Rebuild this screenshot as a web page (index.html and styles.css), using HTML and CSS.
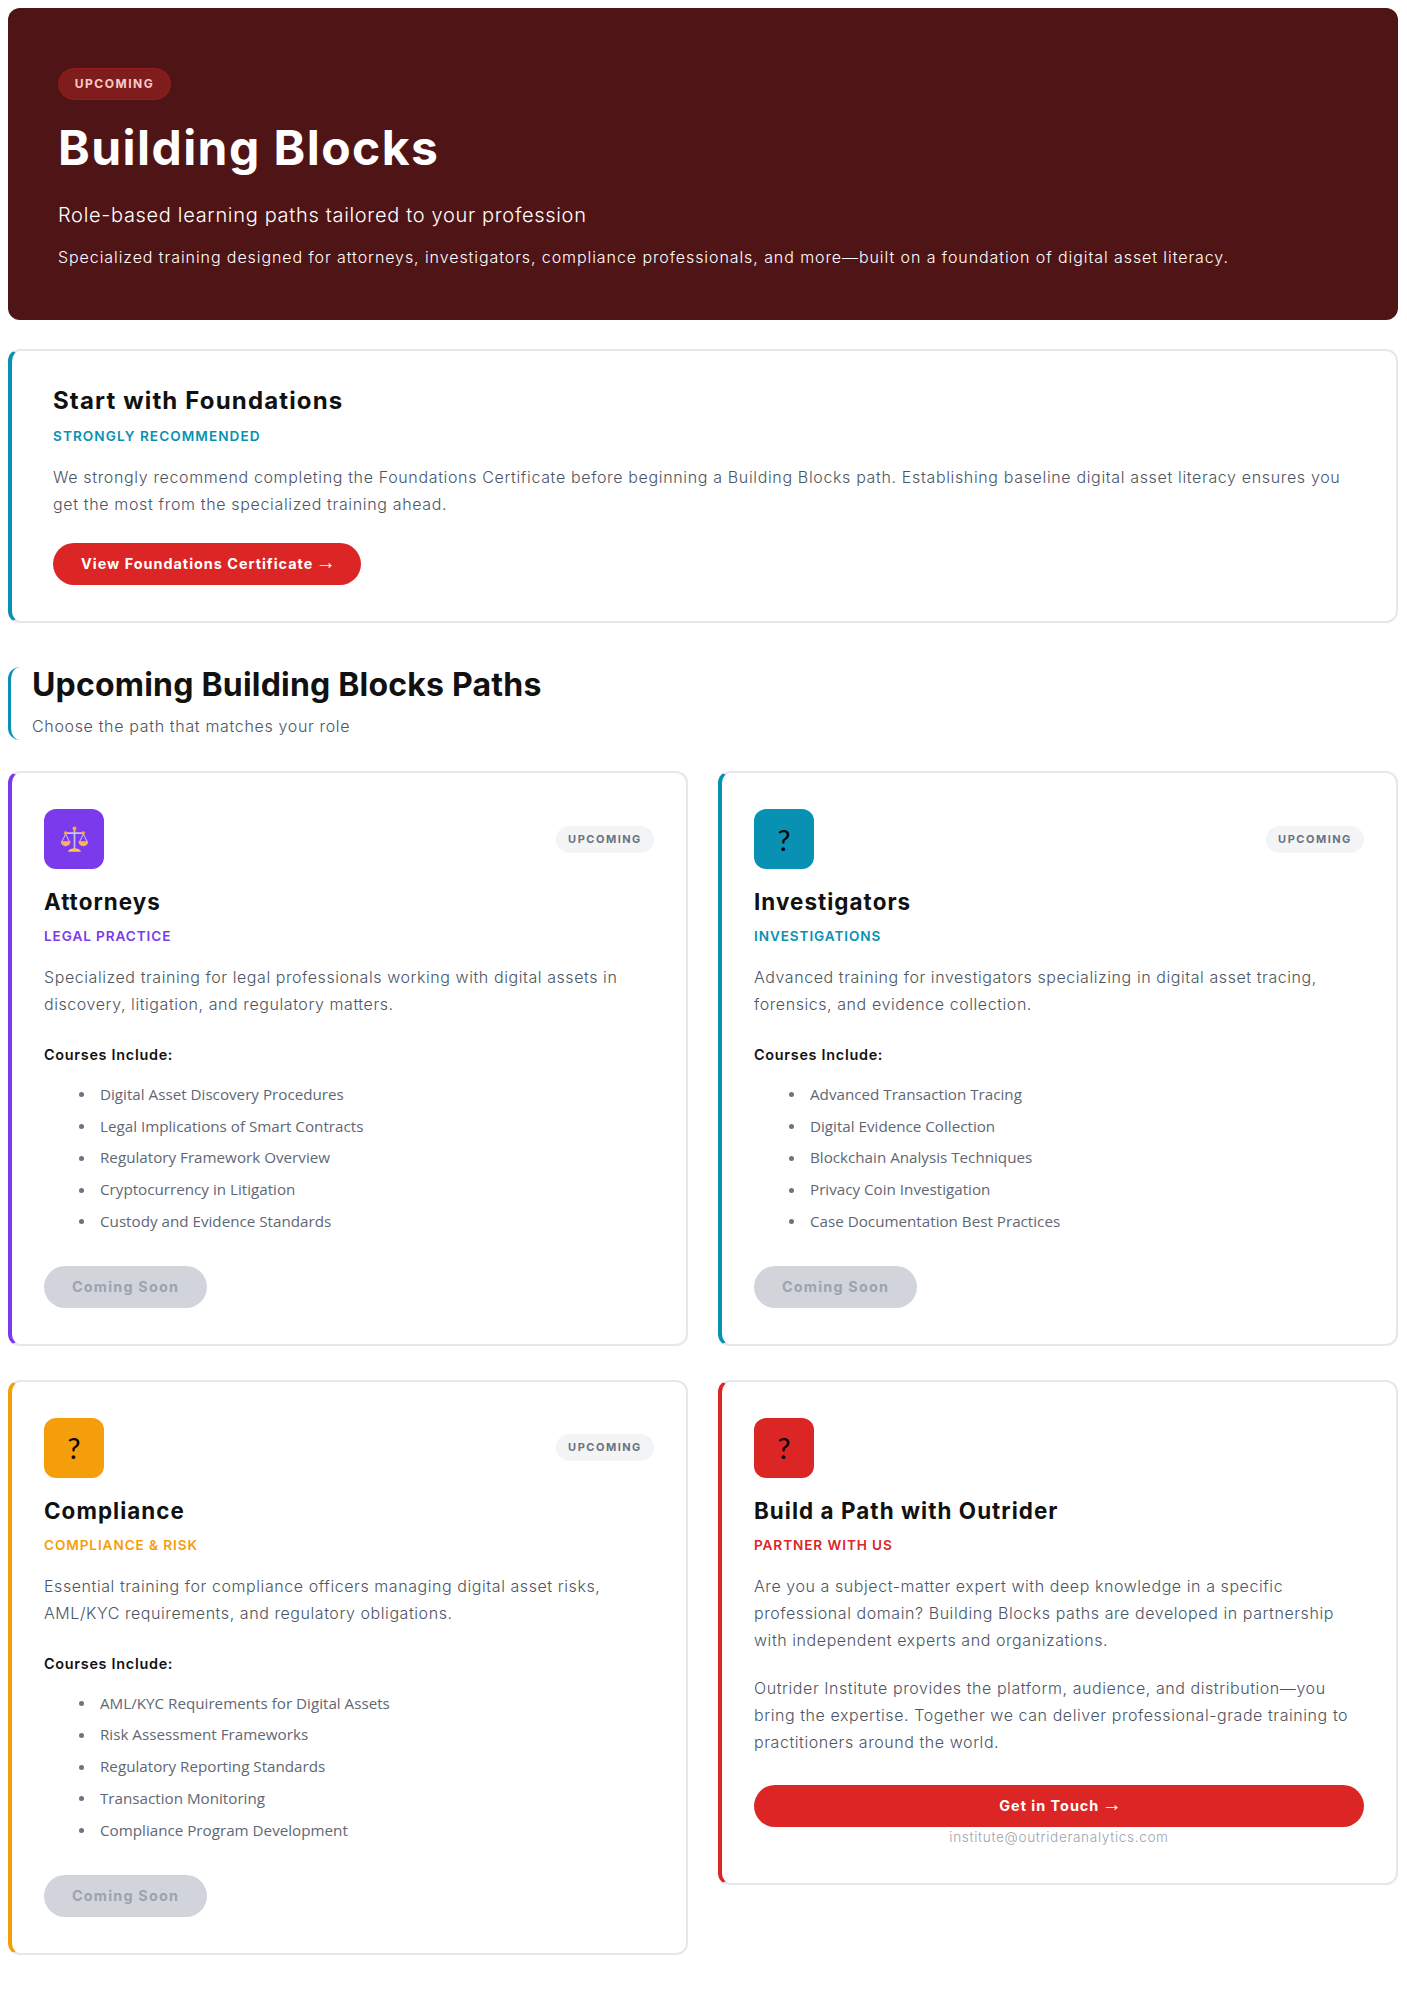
FILE: index.html
```html
<!DOCTYPE html>
<html lang="en">
<head>
    <meta charset="UTF-8">
    <meta name="viewport" content="width=device-width, initial-scale=1.0">
    <title>Building Blocks</title>
    <link rel="stylesheet" href="styles.css">
</head>
<body>
    <header class="hero">
        <span class="hero-badge">UPCOMING</span>
        <h1>Building Blocks</h1>
        <p class="hero-sub">Role-based learning paths tailored to your profession</p>
        <p class="hero-desc">Specialized training designed for attorneys, investigators, compliance professionals, and more—built on a foundation of digital asset literacy.</p>
    </header>

    <section class="foundations">
        <h2>Start with Foundations</h2>
        <div class="kicker kicker-teal">STRONGLY RECOMMENDED</div>
        <p class="text">We strongly recommend completing the Foundations Certificate before beginning a Building Blocks path. Establishing baseline digital asset literacy ensures you get the most from the specialized training ahead.</p>
        <a class="btn" href="#">View Foundations Certificate <span class="arrow">→</span></a>
    </section>

    <div class="section-head">
        <h2>Upcoming Building Blocks Paths</h2>
        <p>Choose the path that matches your role</p>
    </div>

    <div class="paths">
        <article class="path path-purple">
            <div class="path-top">
                <div class="path-icon icon-purple">
                    <svg width="31" height="31" viewBox="0 0 28 28">
                        <rect x="13.2" y="4" width="1.6" height="19" fill="#c4bee0"/>
                        <rect x="6" y="7.5" width="16" height="1.5" fill="#cfcae6"/>
                        <path d="M6 9 L2.6 16 M6 9 L9.4 16 M22 9 L18.6 16 M22 9 L25.4 16" stroke="#dcd8ef" stroke-width=".8" fill="none"/>
                        <path d="M1.6 15.6 H10.4 C10.2 18.6 8.4 20 6 20 C3.6 20 1.8 18.6 1.6 15.6 Z" fill="#fcb45c"/>
                        <path d="M17.6 15.6 H26.4 C26.2 18.6 24.4 20 22 20 C19.6 20 17.8 18.6 17.6 15.6 Z" fill="#fcb45c"/>
                        <path d="M8 25 C9 22.6 11.5 22 14 22 C16.5 22 19 22.6 20 25 Z" fill="#fdc44f"/>
                        <circle cx="14" cy="4" r="1.8" fill="#f9a63a"/>
                        <circle cx="6" cy="8.2" r="1.6" fill="#f9a63a"/>
                        <circle cx="22" cy="8.2" r="1.6" fill="#f9a63a"/>
                    </svg>
                </div>
                <span class="status">UPCOMING</span>
            </div>
            <h3>Attorneys</h3>
            <div class="kicker kicker-purple">LEGAL PRACTICE</div>
            <p class="text">Specialized training for legal professionals working with digital assets in discovery, litigation, and regulatory matters.</p>
            <div class="courses-title">Courses Include:</div>
            <ul class="courses">
                <li>Digital Asset Discovery Procedures</li>
                <li>Legal Implications of Smart Contracts</li>
                <li>Regulatory Framework Overview</li>
                <li>Cryptocurrency in Litigation</li>
                <li>Custody and Evidence Standards</li>
            </ul>
            <span class="btn btn-off">Coming Soon</span>
        </article>

        <article class="path path-teal">
            <div class="path-top">
                <div class="path-icon icon-teal">?</div>
                <span class="status">UPCOMING</span>
            </div>
            <h3>Investigators</h3>
            <div class="kicker kicker-teal">INVESTIGATIONS</div>
            <p class="text">Advanced training for investigators specializing in digital asset tracing, forensics, and evidence collection.</p>
            <div class="courses-title">Courses Include:</div>
            <ul class="courses">
                <li>Advanced Transaction Tracing</li>
                <li>Digital Evidence Collection</li>
                <li>Blockchain Analysis Techniques</li>
                <li>Privacy Coin Investigation</li>
                <li>Case Documentation Best Practices</li>
            </ul>
            <span class="btn btn-off">Coming Soon</span>
        </article>

        <article class="path path-amber">
            <div class="path-top">
                <div class="path-icon icon-amber">?</div>
                <span class="status">UPCOMING</span>
            </div>
            <h3>Compliance</h3>
            <div class="kicker kicker-amber">COMPLIANCE &amp; RISK</div>
            <p class="text">Essential training for compliance officers managing digital asset risks, AML/KYC requirements, and regulatory obligations.</p>
            <div class="courses-title">Courses Include:</div>
            <ul class="courses">
                <li>AML/KYC Requirements for Digital Assets</li>
                <li>Risk Assessment Frameworks</li>
                <li>Regulatory Reporting Standards</li>
                <li>Transaction Monitoring</li>
                <li>Compliance Program Development</li>
            </ul>
            <span class="btn btn-off">Coming Soon</span>
        </article>

        <article class="path path-red">
            <div class="path-top">
                <div class="path-icon icon-red">?</div>
            </div>
            <h3>Build a Path with Outrider</h3>
            <div class="kicker kicker-red">PARTNER WITH US</div>
            <p class="text">Are you a subject-matter expert with deep knowledge in a specific professional domain? Building Blocks paths are developed in partnership with independent experts and organizations.</p>
            <p class="text text-next">Outrider Institute provides the platform, audience, and distribution—you bring the expertise. Together we can deliver professional-grade training to practitioners around the world.</p>
            <a class="btn btn-wide" href="#">Get in Touch <span class="arrow">→</span></a>
            <div class="email">institute@outrideranalytics.com</div>
        </article>
    </div>
</body>
</html>
```

FILE: styles.css
```css
body {
    font-family: Inter, "Noto Sans", sans-serif;
    margin: 0;
    padding: 8px 9px 56px 8px;
    background-color: #fff;
    color: #111;
}
.hero {
    background: #4f1415;
    border-radius: 12px;
    padding: 60px 50px 50px;
    height: 312px;
    box-sizing: border-box;
    color: #fff;
}
.hero-badge {
    display: block;
    width: 113px;
    height: 32px;
    box-sizing: border-box;
    background: #7f1d1d;
    border: 1px solid #991b1b;
    border-radius: 16px;
    color: #fecaca;
    font-size: 12px;
    font-weight: 700;
    letter-spacing: 1.5px;
    line-height: 30px;
    text-align: center;
}
.hero h1 {
    font-size: 48px;
    font-weight: 700;
    line-height: 58px;
    margin: 19px 0 0;
    letter-spacing: 1.45px;
}
.hero-sub {
    font-size: 20px;
    font-weight: 300;
    line-height: 28px;
    letter-spacing: 0.68px;
    margin: 24px 0 0;
}
.hero-desc {
    font-size: 16px;
    font-weight: 300;
    line-height: 27px;
    letter-spacing: 0.92px;
    margin: 15px 0 0;
}
.foundations {
    margin-top: 29px;
    border: 2px solid #e5e7eb;
    border-left: 4px solid #0891b2;
    border-radius: 12px;
    padding: 36px 40px 38px 41px;
    height: 274px;
    box-sizing: border-box;
}
.foundations h2 {
    font-size: 24px;
    font-weight: 700;
    line-height: 28px;
    letter-spacing: 1.15px;
    margin: 0;
}
.kicker {
    font-size: 13.6px;
    font-weight: 600;
    line-height: 20px;
    letter-spacing: 1.05px;
    margin-top: 11px;
}
.kicker-teal { color: #0891b2; }
.kicker-purple { color: #7c3aed; }
.kicker-amber { color: #f59e0b; }
.kicker-red { color: #dc2626; }
.text {
    font-size: 16px;
    font-weight: 300;
    line-height: 27px;
    letter-spacing: 0.65px;
    color: #4b5563;
    margin: 18px 0 0;
}
.btn {
    display: inline-block;
    height: 42px;
    line-height: 42px;
    padding: 0 28px;
    border-radius: 21px;
    background: #dc2626;
    color: #fff;
    font-size: 14.4px;
    font-weight: 700;
    letter-spacing: 1px;
    text-decoration: none;
    white-space: nowrap;
    margin-top: 25px;
}
.arrow {
    font-family: "Liberation Sans", sans-serif;
    font-size: 20px;
    line-height: 1;
    font-weight: 400;
    letter-spacing: 0;
    margin: 0 -3px 0 -2px;
}
.btn-off {
    background: #d1d5db;
    color: #9ca3af;
    letter-spacing: 1.2px;
    margin-top: 35px;
}
.btn-wide {
    display: block;
    text-align: center;
    padding: 0;
    margin-top: 29px;
}
.section-head {
    margin-top: 44px;
    border-left: 3px solid #0891b2;
    border-radius: 12px;
    padding-left: 21px;
    height: 73px;
}
.section-head h2 {
    font-size: 32px;
    font-weight: 700;
    line-height: 36px;
    letter-spacing: 0.2px;
    margin: 0;
}
.section-head p {
    font-size: 16px;
    font-weight: 300;
    line-height: 24px;
    letter-spacing: 0.66px;
    color: #4b5563;
    margin: 11px 0 0;
}
.paths {
    display: grid;
    grid-template-columns: 1fr 1fr;
    gap: 34px 30px;
    align-items: start;
    margin-top: 31px;
}
.path {
    border: 2px solid #e5e7eb;
    border-left: 4px solid #e5e7eb;
    border-radius: 12px;
    padding: 36px 32px;
}
.path-purple { border-left-color: #7c3aed; }
.path-teal { border-left-color: #0891b2; }
.path-amber { border-left-color: #f59e0b; }
.path-red { border-left-color: #dc2626; }
.path .text { letter-spacing: 0.57px; }
.path .text-next { margin-top: 21px; }
.path-top {
    display: flex;
    justify-content: space-between;
    align-items: center;
}
.path-icon {
    width: 60px;
    height: 60px;
    border-radius: 12px;
    display: flex;
    align-items: center;
    justify-content: center;
    font-family: Lato, sans-serif;
    font-size: 29px;
    color: #000;
}
.icon-purple { background: #7c3aed; }
.icon-teal { background: #0891b2; }
.icon-amber { background: #f59e0b; }
.icon-red { background: #dc2626; }
.status {
    background: #f3f4f6;
    color: #6b7280;
    font-size: 11px;
    font-weight: 700;
    letter-spacing: 1.5px;
    width: 98px;
    height: 27px;
    line-height: 27px;
    border-radius: 14px;
    text-align: center;
}
.path h3 {
    font-size: 22.4px;
    font-weight: 700;
    line-height: 28px;
    letter-spacing: 1.05px;
    margin: 19px 0 0;
}
.path .kicker {
    letter-spacing: 0.9px;
    margin-top: 10px;
}
.courses-title {
    font-size: 14.4px;
    font-weight: 600;
    line-height: 20px;
    letter-spacing: 0.72px;
    color: #111;
    margin-top: 27px;
}
.courses {
    font-family: "Open Sans", sans-serif;
    font-size: 15.2px;
    line-height: 20px;
    color: #5f6774;
    margin: 19px 0 0;
    padding: 0 0 0 56px;
    list-style: none;
}
.courses li { margin-bottom: 11.7px; }
.courses li:last-child { margin-bottom: 0; }
.courses li::before {
    content: "";
    display: inline-block;
    width: 5px;
    height: 5px;
    border-radius: 50%;
    background: #6b7280;
    margin: 0 16.5px 2px -21.5px;
    vertical-align: middle;
}
.email {
    font-size: 13.6px;
    font-weight: 300;
    line-height: 20px;
    letter-spacing: 0.66px;
    color: #9ca3af;
    text-align: center;
}
```
